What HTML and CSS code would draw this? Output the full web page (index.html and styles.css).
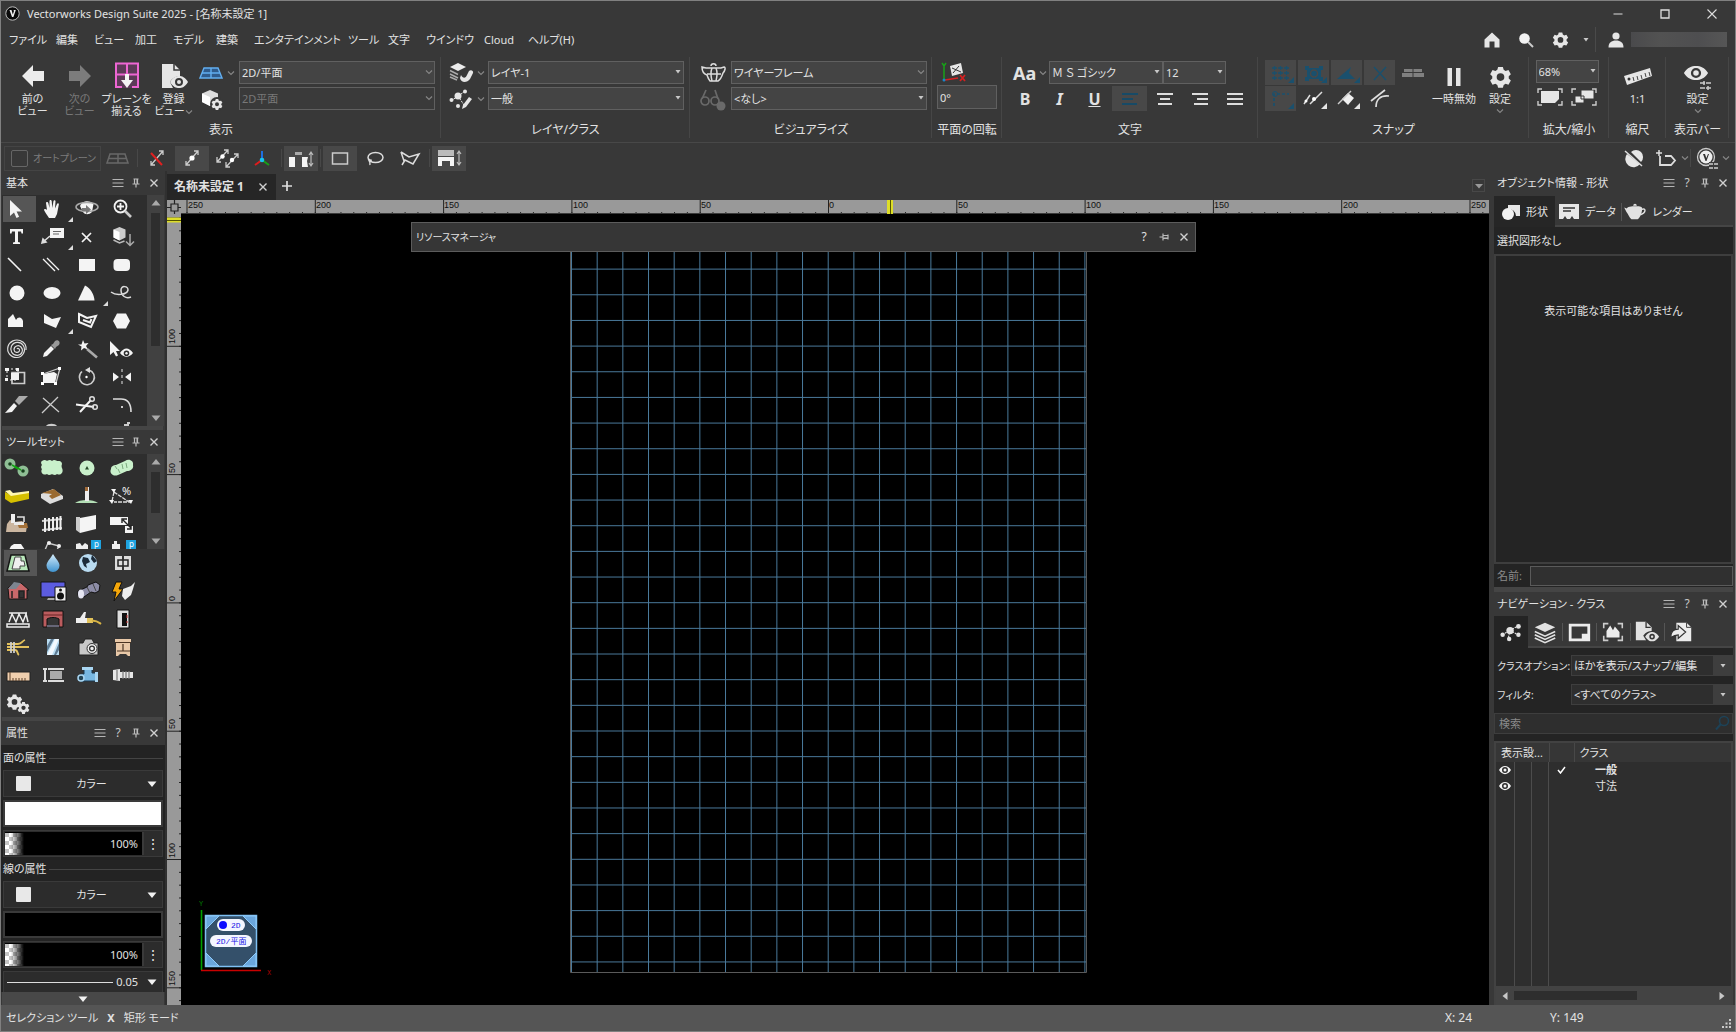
FILE: index.html
```html
<!DOCTYPE html>
<html lang="ja">
<head>
<meta charset="utf-8">
<title>Vectorworks Design Suite 2025 - [名称未設定 1]</title>
<link rel="stylesheet" href="styles.css">
</head>
<body>
<svg class="defs" aria-hidden="true">
  <defs>
    <linearGradient id="gBlue" x1="0" y1="0" x2="0" y2="1"><stop offset="0" stop-color="#d4ecfb"/><stop offset="1" stop-color="#3f93cf"/></linearGradient>
  </defs>
  <!-- shared glyphs -->
  <symbol id="caret" viewBox="0 0 8 6"><path d="M1 1.5l3 3 3-3" fill="none" stroke="#858585" stroke-width="1.2"/></symbol>
  <symbol id="tri" viewBox="0 0 8 6"><path d="M1.5 1h5L4 4.5z" fill="#c8c8c8"/></symbol>
  <symbol id="menu" viewBox="0 0 14 14"><path d="M1.500 3.500h11M1.500 7h11M1.500 10.500h11" stroke="#b5b5b5" stroke-width="1.200"/></symbol>
  <symbol id="pin" viewBox="0 0 14 14"><path d="M4.500 3h5M5.500 3v5M8.500 3v5M3.500 8h7M7 8v3.500" stroke="#bbb" stroke-width="1.200" fill="none"/><path d="M7.500 3h1.500v4.500H7.500z" fill="#bbb"/></symbol>
  <symbol id="close" viewBox="0 0 14 14"><path d="M3.500 3.500l7 7M10.500 3.500l-7 7" stroke="#d0d0d0" stroke-width="1.400"/></symbol>
  <symbol id="corner" viewBox="0 0 5 5"><path d="M5 0v5H0z" fill="currentColor"/></symbol>
  <symbol id="up" viewBox="0 0 12 8"><path d="M6 1l4.500 5.500h-9z" fill="#aaa"/></symbol>
  <symbol id="down" viewBox="0 0 12 8"><path d="M6 7L1.500 1.500h9z" fill="#aaa"/></symbol>
  <symbol id="downw" viewBox="0 0 12 8"><path d="M6 7L1.500 1.500h9z" fill="#f2f2f2"/></symbol>
  <symbol id="gear" viewBox="0 0 24 24"><path fill-rule="evenodd" fill="currentColor" d="M9.500 2h5l.8 3 2 1.200 3-.9 2.500 4.300-2.200 2.100v2.400l2.200 2.100-2.500 4.300-3-.9-2 1.200-.8 3h-5l-.8-3-2-1.200-3 .9-2.500-4.300 2.200-2.100v-2.400L1.200 9.600l2.500-4.300 3 .9 2-1.200zM12 8.600a4 4 0 100 8 4 4 0 000-8z"/></symbol>
  <symbol id="eye" viewBox="0 0 28 16"><path fill-rule="evenodd" fill="currentColor" d="M1 8C5 2 9 .5 14 .5S23 2 27 8c-4 6-8 7.500-13 7.500S5 14 1 8zM14 2.500a5.500 5.500 0 100 11 5.500 5.500 0 000-11z"/><circle cx="14" cy="8" r="3" fill="currentColor"/></symbol>
  <symbol id="eyes" viewBox="0 0 12 10"><path fill-rule="evenodd" fill="#f4f4f4" d="M0 5c3-5.500 9-5.500 12 0-3 5.500-9 5.500-12 0zm6-3a3 3 0 100 6 3 3 0 000-6z"/><circle cx="6" cy="5" r="1.500" fill="#f4f4f4"/></symbol>
  <symbol id="teapot" viewBox="0 0 26 20"><path d="M4 6C4 4 9 3.500 14 3.500S21 4 21 6s-1 9-5 12h-7C6.500 16 6 13 3.500 10L1 5zM11 3c0-3 4-3 4 0z" fill="currentColor"/><path d="M20.500 7c5-2 5 4-1.500 6" stroke="currentColor" stroke-width="1.600" fill="none"/></symbol>
  <symbol id="nodes" viewBox="0 0 28 28"><path d="M5 17l8-5 8-4M13 12l8 5M13 12l-2 9" stroke="currentColor" stroke-width="1.200" stroke-dasharray="2 1"/><g fill="currentColor"><circle cx="13" cy="12.500" r="4"/><circle cx="5" cy="17" r="2.400"/><circle cx="22" cy="8" r="2.600"/><circle cx="22" cy="17" r="2.400"/><circle cx="12" cy="21.500" r="2.400"/></g></symbol>
  <symbol id="layers" viewBox="0 0 28 28"><path d="M14 4l11 5-11 5L3 9z" fill="currentColor"/><path d="M3 13.500l11 5 11-5M3 17l11 5 11-5M3 20.500l11 5 11-5" fill="none" stroke="currentColor" stroke-width="1.800"/></symbol>
  <symbol id="pageeye" viewBox="0 0 28 28"><path d="M2 3h11l6 6v4c-6 0-9 5-9 5l3 5H2z" fill="currentColor"/><path d="M13 3v6h5" fill="none" stroke="#333" stroke-width="1.400"/><path fill-rule="evenodd" fill="currentColor" d="M12 19c3-4 5-5 7.500-5s4.500 1 7.500 5c-3 4-5 5-7.500 5S15 23 12 19zm7.500-3a3 3 0 100 6 3 3 0 000-6z"/><circle cx="19.500" cy="19" r="1.300" fill="currentColor"/></symbol>
  <!-- basic tools -->
  <symbol id="t-arrow" viewBox="0 0 28 28"><path d="M7 5v16l4-3.600 2.500 5.600 2.600-1.200-2.500-5.400H19z" fill="#f4f4f4"/></symbol>
  <symbol id="t-hand" viewBox="0 0 28 28"><path d="M11 23c-2-3-4-6-5-8 0-1.500 2-1.500 3 0L8 8c0-1.500 2-1.500 2.300 0l1.200 5V6c0-1.500 2-1.500 2.200 0l.6 7 1.200-7c.3-1.400 2.200-1 2 .4l-.5 7 2-4.400c.6-1.200 2.200-.6 1.800.8L19 19l-2 4z" fill="#f4f4f4"/></symbol>
  <symbol id="t-orbit" viewBox="0 0 28 28"><path d="M7 11a8 8 0 0113.500-2L19 17c-3 3-7 3-9 0z" fill="#f4f4f4"/><ellipse cx="14" cy="12" rx="11" ry="4.500" fill="none" stroke="#aaa" stroke-width="1.500"/><path d="M9 13h4v-3l5 4.500-5 4.500v-3H9z" fill="#777"/></symbol>
  <symbol id="t-zoom" viewBox="0 0 28 28"><circle cx="12.500" cy="11.500" r="6" fill="none" stroke="#f4f4f4" stroke-width="1.800"/><path d="M9 11.500h7M12.500 8v7" stroke="#f4f4f4" stroke-width="1.800"/><path d="M17 16l6 6" stroke="#ccc" stroke-width="2.600"/></symbol>
  <symbol id="t-text" viewBox="0 0 28 28"><path d="M7 6h13v4.500h-1.500L18 8.500h-3V19l2 .6V21h-7v-1.400l2-.6V8.500H9l-.5 2H7z" fill="#f4f4f4"/></symbol>
  <symbol id="t-callout" viewBox="0 0 28 28"><path d="M12 5h14v10H12z" fill="#f4f4f4"/><path d="M15 8.500h8M15 11h6" stroke="#666"/><path d="M12 13l-7 6M4 20l1-4 3 3z" stroke="#ddd" stroke-width="1.600" fill="#eee"/></symbol>
  <symbol id="t-x" viewBox="0 0 28 28"><path d="M9 10l9 9M18 10l-9 9" stroke="#f4f4f4" stroke-width="1.700"/></symbol>
  <symbol id="t-cube" viewBox="0 0 28 28"><path d="M11.500 4l6 2.500v8l-6 3-6-3v-8z" fill="#ccc"/><path d="M5.500 6.500l6 2.500v8.500l-6-3z" fill="#fff"/><path d="M5.500 17l6 3 5-2" stroke="#bbb" stroke-width="1.500" fill="none"/><path d="M22 11v11M18 18.500l4 4 4-4" stroke="#aaa" stroke-width="1.500" fill="none"/></symbol>
  <symbol id="t-line" viewBox="0 0 28 28"><path d="M5 7l13 13" stroke="#f4f4f4" stroke-width="1.600"/></symbol>
  <symbol id="t-dline" viewBox="0 0 28 28"><path d="M5 8l12 12M9 7l12 12" stroke="#f4f4f4" stroke-width="1.300"/></symbol>
  <symbol id="t-rect" viewBox="0 0 28 28"><path d="M6 8h16v12H6z" fill="#f4f4f4"/></symbol>
  <symbol id="t-rrect" viewBox="0 0 28 28"><rect x="5.500" y="8" width="16.500" height="12" rx="4" fill="#f4f4f4"/></symbol>
  <symbol id="t-circle" viewBox="0 0 28 28"><circle cx="14" cy="14" r="7.500" fill="#f4f4f4"/></symbol>
  <symbol id="t-ellipse" viewBox="0 0 28 28"><ellipse cx="14" cy="14" rx="8.500" ry="6" fill="#f4f4f4"/></symbol>
  <symbol id="t-arc" viewBox="0 0 28 28"><path d="M12 6.500c6 3 9 9 9.500 15H5z" fill="#f4f4f4"/></symbol>
  <symbol id="t-free" viewBox="0 0 28 28"><path d="M3 13c5 4 16 3 17-2 0-4-7-5-7 0 0 6 5 9 10 7" fill="none" stroke="#ddd" stroke-width="1.500"/></symbol>
  <symbol id="t-bump" viewBox="0 0 28 28"><path d="M5 20V12l5-5 3 6c2-4 6-3 7 1v6z" fill="#f4f4f4"/></symbol>
  <symbol id="t-poly" viewBox="0 0 28 28"><path d="M6 7l8 5 9-2-5 11-12-5z" fill="#f4f4f4"/></symbol>
  <symbol id="t-dpoly" viewBox="0 0 28 28"><path d="M6 7l8 4 9-2-5 11-12-5zM10 13l7 2.500 1.500-3.500" fill="none" stroke="#f4f4f4" stroke-width="2"/></symbol>
  <symbol id="t-hex" viewBox="0 0 28 28"><path d="M9 6.500h9l4 7.500-4 7.500H9L5 14z" fill="#f4f4f4"/></symbol>
  <symbol id="t-spiral" viewBox="0 0 28 28"><path d="M14 14c1-1.500 3 0 2.500 1.700-1 2.600-5.200 2-5.500-1 0-3.700 4.500-5.300 7-2.700 3 3.300.7 8-3.500 8.300C9 20.500 6.500 15 8.500 11c2.300-4.300 9-5 11.800-.5 3.200 5.500-.8 11.800-6.500 12C7.500 22.700 3.500 17 5 11.500 6.700 6 12.500 4 17 5.500c4 1.400 6.500 5 6 9.500" fill="none" stroke="#ddd" stroke-width="1.200"/></symbol>
  <symbol id="t-dropper" viewBox="0 0 28 28"><path d="M5 22l1-4 7-7 3 3-7 7z" fill="#f4f4f4"/><path d="M13 10l2-1 2-3c3-2 6 1 4 4l-3 2-1 2z" fill="#999"/></symbol>
  <symbol id="t-wand" viewBox="0 0 28 28"><path d="M10 5l1.500 3.500 4-.5-2.500 3 2 3.500-4-1.500-3 2.500.5-4L5 9.500h3.500z" fill="#f4f4f4"/><path d="M14 14l10 8.500" stroke="#aaa" stroke-width="2.600"/></symbol>
  <symbol id="t-seleye" viewBox="0 0 28 28"><path d="M2 6v14l3.500-3 2.500 4.500 2-1-2-4.500h4z" fill="#f4f4f4"/><path fill-rule="evenodd" d="M12 18c4-6 9-6 13 0-4 5-9 5-13 0zm6.500-2.500a2.800 2.800 0 100 5.600 2.800 2.800 0 000-5.600z" fill="#f4f4f4"/><circle cx="18.500" cy="18.200" r="1.200" fill="#f4f4f4"/></symbol>
  <symbol id="t-clip" viewBox="0 0 28 28"><path d="M4 6h11v11H4z" fill="none" stroke="#eee" stroke-dasharray="2 2"/><path d="M9 9.500h12.500v11H9z" fill="none" stroke="#ccc" stroke-width="1.700"/><path d="M8 10h8v7H8z" fill="#f4f4f4"/><path d="M2 5h4v3H2zM13 5h3v3h-3zM2 15h3v3H2z" fill="#f4f4f4"/></symbol>
  <symbol id="t-reshape" viewBox="0 0 28 28"><path d="M5 11l11-2 3 2-2 9-12 0z" fill="#f4f4f4"/><path d="M5 11L22 5l-4 15" stroke="#ccc" fill="none" stroke-width="1.300"/><path d="M3 9h3v3H3zM20 4h3v3h-3zM3 19h3v3H3zM16 19h3v3h-3z" fill="#fff"/></symbol>
  <symbol id="t-rotate" viewBox="0 0 28 28"><path d="M9 8.500a7.500 7.500 0 107-1.500" fill="none" stroke="#ccc" stroke-width="1.600"/><path d="M12 7l5-3v6z" fill="#ddd"/><circle cx="13.500" cy="14" r="1.200" fill="#fff"/></symbol>
  <symbol id="t-mirror" viewBox="0 0 28 28"><path d="M5 9.500l6 4.500-6 4.500zM23 9.500L17 14l6 4.500z" fill="#f4f4f4"/><path d="M14 6v16" stroke="#aaa" stroke-width="1.500" stroke-dasharray="3 3"/></symbol>
  <symbol id="t-knife" viewBox="0 0 28 28"><path d="M2 22l9-10 3 3-5 6z" fill="#f4f4f4"/><path d="M12 10l4-5h9l-9 9z" fill="#aaa"/></symbol>
  <symbol id="t-trim" viewBox="0 0 28 28"><path d="M4 22L20 6M5 7l16 14" stroke="#ccc" stroke-width="1.300"/></symbol>
  <symbol id="t-scissors" viewBox="0 0 28 28"><path d="M3 13.500l18 2.500M7 21L18 9" stroke="#f4f4f4" stroke-width="2"/><circle cx="19" cy="8" r="2.300" fill="none" stroke="#ddd" stroke-width="1.500"/><circle cx="22" cy="16" r="2.300" fill="none" stroke="#ddd" stroke-width="1.500"/></symbol>
  <symbol id="t-fillet" viewBox="0 0 28 28"><path d="M5 8h8c6 0 10 4 10 13" fill="none" stroke="#ddd" stroke-width="1.600"/><circle cx="14" cy="16" r="1" fill="#fff"/></symbol>
  <symbol id="t-half" viewBox="0 0 28 28"><path d="M8 7c2-3 9-3 11 0z" fill="#ccc"/></symbol>
  <symbol id="t-half2" viewBox="0 0 28 28"><path d="M16 6h5M19 4h3" stroke="#ccc" stroke-width="2"/></symbol>
  <!-- site planning tools -->
  <symbol id="s-link" viewBox="0 0 28 28"><path d="M6 10l14 7" stroke="#12a512" stroke-width="2"/><g fill="#8fbf95"><circle cx="7" cy="10" r="5.500"/><circle cx="20" cy="17" r="5.500"/></g><circle cx="7" cy="10" r="1.800" fill="#17401d"/><circle cx="20" cy="17" r="1.800" fill="#17401d"/><path d="M9 11l9 5" stroke="#12a512" stroke-width="1.500"/></symbol>
  <symbol id="s-bush" viewBox="0 0 28 28"><path d="M4 7c3-2 5 0 5 0s3-2 5 0c2-2 5 0 5 0s5-1 5 3c-1 2 0 4 0 4 2 4-1 8-5 6-2 2-5 0-5 0s-3 2-5 0c-4 2-7-2-5-5 0 0-2-2 0-4 0 0-2-3 0-4z" fill="#c9f0cb"/></symbol>
  <symbol id="s-tree" viewBox="0 0 28 28"><circle cx="14" cy="14" r="7.500" fill="#c9f0cb"/><path d="M14 12l2 3.500h-4z" fill="#264a28"/></symbol>
  <symbol id="s-hedge" viewBox="0 0 28 28"><path d="M3 15c0-3 3-4 5-4l9-4c4-3 9 0 8 4 1 4-3 6-6 6l-9 4c-5 2-9-2-7-6z" fill="#c9f0cb"/><path d="M7 12l2 3M10 15l2 4M14 10l1 5M18 9l1 5" stroke="#7aa97d" stroke-width="1"/></symbol>
  <symbol id="s-hard" viewBox="0 0 28 28"><path d="M2 10l6 3 18-3v7L8 21l-6-4z" fill="#d6c000"/><path d="M2 9l5-1 3 3 16-2v2L8 14z" fill="#fff8b0"/></symbol>
  <symbol id="s-slab" viewBox="0 0 28 28"><path d="M3 12l12-5 10 7v3l-13 5-9-6z" fill="#ddd"/><path d="M4 11l12-4 7 6-9 4-3-3 3-2z" fill="#9a6a30"/></symbol>
  <symbol id="s-post" viewBox="0 0 28 28"><path d="M2 21c5-4 18-4 23 0z" fill="#b4dfb6"/><path d="M12 5h4v14h-4z" fill="#eee"/><path d="M12 5h3v4h-3z" fill="#a06a38"/></symbol>
  <symbol id="s-grade" viewBox="0 0 28 28"><path d="M6 10l15 10H6M6 10L4 19" stroke="#ddd" stroke-width="1.300" fill="none" stroke-dasharray="4 1"/><path d="M3 7h5l-2 4zM1 18h5l-2 4zM20 18h5l-2 4z" fill="#f4f4f4"/></symbol>
  <symbol id="s-site" viewBox="0 0 28 28"><path d="M4 14l3-4 4 2 8-1 5 5-1 6H3z" fill="#cbb6a0"/><path d="M8 4h4v9H8z" fill="#eee"/><path d="M14 7h7v5" fill="none" stroke="#ddd" stroke-width="1.600"/><path d="M14 13h10l1 5h-9z" fill="#a5723a"/><path d="M11 12h10v3H11z" fill="#e8e8e8"/></symbol>
  <symbol id="s-rail" viewBox="0 0 28 28"><path d="M4 11l20-2M4 20l20-2" stroke="#ccc" stroke-width="1.800"/><path d="M7 8v14M11 8v13M15 7v14M19 7v13M22.500 6v14" stroke="#eee" stroke-width="2"/></symbol>
  <symbol id="s-wall" viewBox="0 0 28 28"><path d="M3 7h4v16l-4-3z" fill="#ccc"/><path d="M7 8l16-3v14L7 23z" fill="#f4f4f4"/></symbol>
  <symbol id="s-move" viewBox="0 0 28 28"><path d="M2 7h18v8H2z" fill="#f4f4f4"/><path d="M17 16h8v7h-8z" fill="#f4f4f4"/><path d="M15 10l8 8M14 13v-4h5M23 15v4h-4" stroke="#222" stroke-width="1.400" fill="none"/></symbol>
  <symbol id="s-c1" viewBox="0 0 28 28"><path d="M8 8l3-2h7l4 6H6z" fill="#f4f4f4"/></symbol>
  <symbol id="s-c2" viewBox="0 0 28 28"><path d="M7 12l3-7 11 3-2 4" stroke="#ccc" stroke-width="1.400" fill="none"/><circle cx="11" cy="5" r="2" fill="#eee"/><circle cx="21" cy="8" r="2" fill="#eee"/></symbol>
  <symbol id="s-c3" viewBox="0 0 28 28"><path d="M3 6l4-1 2 3 3-3 3 2v6H3z" fill="#eee"/><path d="M18 2h10v10H18z" fill="#1fa3e0"/></symbol>
  <symbol id="s-c4" viewBox="0 0 28 28"><path d="M6 3h3v3h3v6H4V6h2z" fill="#eee"/><path d="M18 2h10v10H18z" fill="#1fa3e0"/></symbol>
  <!-- tool set categories -->
  <symbol id="c-site" viewBox="0 0 28 28"><path d="M7 6h14l4 16H3z" fill="#b9e8bb" stroke="#151515" stroke-width="1.500"/><path d="M11 8h6v4h3l1 5h-5v3H8z" fill="#f0f0f0" stroke="#444"/></symbol>
  <symbol id="c-drop" viewBox="0 0 28 28"><path d="M14 5c3 5 6.500 8 6.500 11.500a6.500 6.500 0 01-13 0C7.500 13 11 10 14 5z" fill="url(#gBlue)"/></symbol>
  <symbol id="c-globe" viewBox="0 0 28 28"><circle cx="14" cy="14" r="9" fill="#b9dcf2"/><path d="M9 8l5 1 2 4-4 2 1 4-3-2-2-5zM18 6l5 6-3 2-3-4z" fill="#1c2b3a"/></symbol>
  <symbol id="c-plan" viewBox="0 0 28 28"><path d="M6 7h7v3h2V7h7v14h-7v-3h-2v3H6z" fill="#ddd"/><path d="M9 11h10v6H9zM14 10v8" fill="none" stroke="#222" stroke-width="1.500"/></symbol>
  <symbol id="c-house" viewBox="0 0 28 28"><path d="M4 11l6-5h7l8 7h-2v9H5z" fill="#c9686a" stroke="#151515"/><path d="M4 12l6-7 7 1-5 6z" fill="#7d8590"/><path d="M15 14h5v7h-5zM8 14v7" fill="#333" stroke="#222" stroke-width="1.500"/></symbol>
  <symbol id="c-av" viewBox="0 0 28 28"><path d="M2 5h24v15H2z" fill="#5c5ce0" stroke="#151515"/><path d="M9 21h8v2H8z" fill="#aaa"/><path d="M16 10h11v14H16z" fill="#eee" stroke="#111"/><circle cx="21.500" cy="19" r="3.500" fill="#111"/><circle cx="21.500" cy="13" r="1.500" fill="#111"/></symbol>
  <symbol id="c-light" viewBox="0 0 28 28"><path d="M4 14l9-4 1-2 8-3 4 3-1 6-4 2-4-1-7 5c-5 2-7-2-6-6z" fill="#8c8ca6" stroke="#111"/><ellipse cx="7" cy="17" rx="3" ry="4.500" fill="#e6e6f2"/><path d="M13 10l3 6M19 7l3 7" stroke="#444"/></symbol>
  <symbol id="c-elec" viewBox="0 0 28 28"><path d="M7 5h6l-3 7h4L5 24l2-9H3z" fill="#f5a70a" stroke="#111"/><path d="M14 12l8-3 4-4-2 7-2 6-6 5-3-4z" fill="#eee"/></symbol>
  <symbol id="c-truss" viewBox="0 0 28 28"><path d="M5 8h18M3 19h22v3H3zM5 17l3-8 4 8 3-8 4 8 3-8 2 8" fill="none" stroke="#eee" stroke-width="1.500"/></symbol>
  <symbol id="c-stage" viewBox="0 0 28 28"><path d="M4 6h20v16h-4v-8c-3-2-9-2-12 0v8H4z" fill="#bb5c5e" stroke="#111"/><path d="M8 20h12v2H8z" fill="#667"/><path d="M4 10h20" stroke="#6b2224"/></symbol>
  <symbol id="c-cable" viewBox="0 0 28 28"><path d="M2 13h4l4-6h2l-1 6h5v5H2z" fill="#eee"/><path d="M13 13h6v5h-6z" fill="#e3c35a"/><path d="M18 16c4-1 6 1 9 3" stroke="#d8b445" stroke-width="2" fill="none"/></symbol>
  <symbol id="c-rack" viewBox="0 0 28 28"><path d="M8 5h12v18H8z" fill="#ddd" stroke="#111"/><path d="M13 8h5v13h-5z" fill="#111"/><path d="M18 10v3M18 16v2" stroke="#c33"/></symbol>
  <symbol id="c-wire" viewBox="0 0 28 28"><path d="M3 11h11c4 0 4-3 7-4M3 14h22M3 17h8c3 0 2 4 4 5" fill="none" stroke="#e2c05c" stroke-width="1.800"/><path d="M7 9v11M10 9v11" stroke="#ccc" stroke-width="1.800"/></symbol>
  <symbol id="c-glass" viewBox="0 0 28 28"><path d="M8 6h12v16H8z" fill="#b9dcf2"/><path d="M8 22L16 6h4l-7 16z" fill="#f2f9ff"/><path d="M12 6h3L8 19v-6zM20 10v7l-3 5h-2z" fill="#5d7a92"/></symbol>
  <symbol id="c-camera" viewBox="0 0 28 28"><path d="M5 10h4l2-4h7l2 4h4v12H5z" fill="#c8c8c8" stroke="#222"/><circle cx="18" cy="15.500" r="5" fill="#eee" stroke="#333"/><circle cx="18" cy="15.500" r="2.400" fill="none" stroke="#333" stroke-width="1.300"/></symbol>
  <symbol id="c-cabinet" viewBox="0 0 28 28"><path d="M6 6h16v3h-1v14h-2l-2-2h-6l-2 2H7V9H6z" fill="#e8c8a8"/><path d="M6 9.500h16M14 11v7M8 18h13" stroke="#4a3423" stroke-width="1.200"/></symbol>
  <symbol id="c-ruler" viewBox="0 0 28 28"><path d="M3 11h23v9H3z" fill="#f0cfae" stroke="#222"/><path d="M6 11v9M9 17v3M12 17v3M15 17v3M18 17v3M21 17v3" stroke="#5c4028"/></symbol>
  <symbol id="c-beam" viewBox="0 0 28 28"><path d="M4 8h4M6 8v12M4 20h4M9 8h16M9 20h16" stroke="#ddd" stroke-width="2" fill="none"/><path d="M11 10h12v8H11z" fill="#aaa"/></symbol>
  <symbol id="c-pipe" viewBox="0 0 28 28"><path d="M10 8h8v4h5v8H10c-6 3-7-8 0-7z" fill="#78b8e2" stroke="#1b3b52"/><path d="M8 6h11v3H8z" fill="#a9d6f2"/><circle cx="7" cy="17" r="3" fill="#245" stroke="#a9d6f2" stroke-width="1.500"/><path d="M21 11h3v10h-3z" fill="#a9d6f2"/></symbol>
  <symbol id="c-bolt" viewBox="0 0 28 28"><path d="M4 9l7-1v12l-7-1zM11 11h13v6H11z" fill="#e6e6e6"/><path d="M14 10v8M17 10v8M20 10v8M8 9v10" stroke="#777" stroke-width="1.200"/></symbol>
</svg>

<div class="window">
  <header class="titlebar">
    <svg class="logo" width="15" height="15" viewBox="0 0 15 15"><circle cx="7.500" cy="7.500" r="6.700" fill="#0a0a0a" stroke="#bbb"/><path d="M4.500 4h2l1.300 4.500L9 5 8.500 4h2.300L8.400 11H7z" fill="#f0f0f0"/></svg>
    <h1 class="app-title">Vectorworks Design Suite 2025 - [名称未設定 1]</h1>
    <div class="win-buttons">
      <button aria-label="最小化"><svg width="12" height="12"><path d="M1.500 6h9" stroke="#ddd"/></svg></button>
      <button aria-label="最大化"><svg width="12" height="12"><path d="M2 2h8v8H2z" fill="none" stroke="#ddd" stroke-width="1.300"/></svg></button>
      <button aria-label="閉じる"><svg width="12" height="12"><path d="M1.500 1.500l9 9M10.500 1.500l-9 9" stroke="#ddd" stroke-width="1.100"/></svg></button>
    </div>
  </header>

  <div class="menubar">
    <nav class="menus">
      <a href="#">ファイル</a><a href="#">編集</a><a href="#">ビュー</a><a href="#">加工</a><a href="#">モデル</a><a href="#">建築</a><a href="#">エンタテインメント</a><a href="#">ツール</a><a href="#">文字</a><a href="#">ウインドウ</a><a href="#">Cloud</a><a href="#">ヘルプ(H)</a>
    </nav>
    <div class="account">
      <button aria-label="ホーム"><svg width="18" height="18"><path d="M9 1.500l7.500 7V16.500H11.500v-6h-5v6H1.500v-8z" fill="#e6e6e6"/></svg></button>
      <button aria-label="検索"><svg width="18" height="18"><circle cx="7.500" cy="7.500" r="5.300" fill="#f2f2f2"/><path d="M11 11l5 5" stroke="#ccc" stroke-width="2"/></svg></button>
      <button aria-label="環境設定"><svg width="17" height="17"><use href="#gear"/></svg></button>
      <svg class="acc-tri" width="8" height="6"><use href="#tri"/></svg>
      <span class="user"><svg width="18" height="18"><circle cx="9" cy="5" r="3.600" fill="#e6e6e6"/><path d="M1.500 16.500c0-5 3-7 7.500-7s7.500 2 7.500 7z" fill="#e6e6e6"/></svg><span class="redacted"></span></span>
    </div>
  </div>

  <section class="ribbon">
    <div class="group g-view">
      <div class="gbody">
        <button class="big"><svg width="28" height="28"><path d="M3 14L14 3v6h11v10H14v6z" fill="#ececec"/></svg><span>前の<br>ビュー</span></button>
        <button class="big off"><svg width="28" height="28"><path d="M25 14L14 3v6H3v10h11v6z" fill="#7c7c7c"/></svg><span>次の<br>ビュー</span></button>
        <button class="big"><svg width="28" height="28"><path d="M3 2h22v24H3z" fill="#5d3a58"/><path d="M9 25H3V1.500h22V25h-6M3 12.500h22M14 2v11" fill="none" stroke="#ee66d3" stroke-width="2"/><path d="M12 12h4v6h4l-6 8-6-8h4z" fill="#f4f4f4"/></svg><span>プレーンを<br>揃える</span></button>
        <button class="big"><svg width="28" height="28"><path d="M2 2h12l6 6v6c-7 0-10 6-10 6l3 6H2z" fill="#e6e6e6"/><path d="M14 2v6h6" fill="none" stroke="#3a3a3a" stroke-width="1.500"/><path fill-rule="evenodd" fill="#e6e6e6" d="M10 20c3-5 6-6 9-6s6 1 9 6c-3 5-6 6-9 6s-6-1-9-6zm9-4a4 4 0 100 8 4 4 0 000-8z"/><circle cx="19" cy="20" r="2" fill="#e6e6e6"/></svg><span>登録<br>ビュー<svg class="incaret" width="8" height="6"><use href="#caret"/></svg></span></button>
        <div class="rows">
          <div class="row"><svg width="24" height="24"><path d="M5 7h14l4 10H1zM12 7v10M3 12h18" fill="#2f5b8c" stroke="#62aef0" stroke-width="1.400"/></svg><svg width="8" height="6"><use href="#caret"/></svg><span class="combo w196"><select aria-label="ビュー"><option>2D/平面</option></select><svg width="8" height="6"><use href="#caret"/></svg></span></div>
          <div class="row"><svg width="24" height="24"><path d="M11 3l8 3.500v8L11 19l-8-4V6.500z" fill="#ddd"/><path d="M3 6.500l8 3.500v9l-8-4z" fill="#fff"/><circle cx="18" cy="17" r="7" fill="#383838"/><svg x="12" y="11" width="12" height="12"><use href="#gear" color="#e6e6e6"/></svg></svg><i class="sp"></i><span class="combo w196 off"><select aria-label="投影" disabled><option>2D平面</option></select><svg width="8" height="6"><use href="#caret"/></svg></span></div>
        </div>
      </div>
      <h2>表示</h2>
    </div>
    <div class="group g-layer">
      <div class="gbody"><div class="rows">
        <div class="row"><svg width="26" height="24"><path d="M10 2l8 4-8 4-8-4z" fill="#ececec"/><path d="M2 9.500l8 4M2 13l8 4M2 16l7 3" stroke="#aaa" stroke-width="1.500" fill="none"/><path d="M13 14c2 4 5 3 6 0l2-4c2-2 5 0 4 2l-3 6c-3 4-9 4-10-1zM13 14l3-2" fill="#e6e6e6"/></svg><svg width="8" height="6"><use href="#caret"/></svg><span class="combo w196"><select aria-label="レイヤ"><option>レイヤ-1</option></select><svg width="8" height="6"><use href="#tri"/></svg></span></div>
        <div class="row"><svg width="26" height="24"><path d="M3 14l7-5 6-4M10 9l6 9" stroke="#e6e6e6" stroke-dasharray="2 1"/><g fill="#e6e6e6"><circle cx="10" cy="9" r="3.500"/><circle cx="3.500" cy="13" r="2"/><circle cx="17" cy="4.500" r="2"/><circle cx="10" cy="19" r="2"/><path d="M15 18l6-8 3 2-6 8-4 2z"/></g></svg><svg width="8" height="6"><use href="#caret"/></svg><span class="combo w196"><select aria-label="クラス"><option>一般</option></select><svg width="8" height="6"><use href="#tri"/></svg></span></div>
      </div></div>
      <h2>レイヤ/クラス</h2>
    </div>
    <div class="group g-vis">
      <div class="gbody"><div class="rows">
        <div class="row"><svg width="26" height="24"><g fill="none" stroke="#ddd" stroke-width="1.500"><path d="M6 7L2 6c0 4 2 7 5 8 1 3 2 5 3 6h8c2-1 4-5 5-8 2-2 3-6 1-6l-3 1z"/><path d="M11 5c0-3 5-3 5 0M7 13h14M12 7c-2 5-1 9 0 13M16 7c2 5 1 9 0 13"/></g></svg><span class="combo w196"><select aria-label="レンダリング"><option>ワイヤーフレーム</option></select><svg width="8" height="6"><use href="#caret"/></svg></span></div>
        <div class="row"><svg width="26" height="24"><g fill="none" stroke="#6a6a6a" stroke-width="1.700"><circle cx="5" cy="14" r="4"/><circle cx="15" cy="14" r="4"/><path d="M2 12L6 3M18 12L15 3"/></g><circle cx="21" cy="19" r="4.500" fill="#6a6a6a"/></svg><span class="combo w196"><select aria-label="スタイル"><option>&lt;なし&gt;</option></select><svg width="8" height="6"><use href="#tri"/></svg></span></div>
      </div></div>
      <h2>ビジュアライズ</h2>
    </div>
    <div class="group g-rot">
      <div class="gbody col"><svg width="28" height="24"><path d="M10 5l11-3 2 10-11 3z" fill="#e6e6e6"/><path d="M12 7l9 4M19 5l-6 7" stroke="#333"/><path d="M2 2l2 3 2-3M4 5v13" stroke="#18a018" stroke-width="1.500" fill="none"/><path d="M5 19l13-2M20 14l5 6M25 14l-5 6" stroke="#d92020" stroke-width="1.700"/><circle cx="4" cy="19" r="1.500" fill="#1787c9"/></svg>
      <input class="field" aria-label="回転角度" value="0°"></div>
      <h2>平面の回転</h2>
    </div>
    <div class="group g-text">
      <div class="gbody col">
        <div class="row"><b class="aa">Aa</b><svg width="8" height="6"><use href="#caret"/></svg><span class="combo w114"><select aria-label="フォント"><option>Ｍ Ｓ ゴシック</option></select><svg width="8" height="6"><use href="#tri"/></svg></span><span class="combo w63"><select aria-label="サイズ"><option>12</option></select><svg width="8" height="6"><use href="#tri"/></svg></span></div>
        <div class="biu">
          <button aria-label="太字"><b>B</b></button><button aria-label="斜体"><b><em>I</em></b></button><button aria-label="下線"><b><u>U</u></b></button>
          <button class="on" aria-label="左揃え"><svg width="18" height="14"><path d="M1 2h16M1 7h11M1 12h15" stroke="#174a66" stroke-width="2"/></svg></button>
          <button aria-label="中央揃え"><svg width="18" height="14"><path d="M1 2h16M4 7h10M2 12h14" stroke="#ddd" stroke-width="2"/></svg></button>
          <button aria-label="右揃え"><svg width="18" height="14"><path d="M1 2h16M6 7h11M3 12h14" stroke="#ddd" stroke-width="2"/></svg></button>
          <button aria-label="両端揃え"><svg width="18" height="14"><path d="M1 2h16M1 7h16M1 12h16" stroke="#ddd" stroke-width="2"/></svg></button>
        </div>
      </div>
      <h2>文字</h2>
    </div>
    <div class="group g-snap">
      <div class="gbody">
        <div class="snapgrid">
          <button class="on" aria-label="グリッド"><svg width="26" height="20"><path d="M4 5h5M10 5h5M16 5h5M4 10h5M10 10h5M16 10h5M4 15h5M10 15h5M16 15h5M6.500 3v4M12.500 3v4M18.500 3v4M6.500 8v4M12.500 8v4M18.500 8v4M6.500 13v4M12.500 13v4M18.500 13v4" stroke="#1a506d" stroke-width="1.300"/></svg></button>
          <button class="on" aria-label="図形"><svg width="26" height="20"><g fill="#1a506d"><path d="M6 5h14v11H6zM4 3h4v4H4zM18 3h4v4h-4zM4 14h4v4H4zM18 14h4v4h-4z"/></g><circle cx="13" cy="10.500" r="3.500" fill="none" stroke="#484848" stroke-width="1.500"/></svg></button>
          <button class="on" aria-label="角度"><svg width="26" height="20"><path d="M3 16L17 4l-2 6 6 6z" fill="#1a506d"/></svg></button>
          <button class="on nocorner" aria-label="交点"><svg width="26" height="20"><path d="M7 4l12 13M19 4L7 17" stroke="#1a506d" stroke-width="1.500"/></svg></button>
          <button class="nocorner" aria-label="作業平面"><svg width="26" height="20"><path d="M4 6h18v3H4zM2 10h22v4H2z" fill="#808080"/><path d="M13 5v10" stroke="#383838"/></svg></button>
          <button class="on" aria-label="定点"><svg width="26" height="20"><path d="M6 17V5h15" fill="none" stroke="#1a506d" stroke-width="1.700" stroke-dasharray="3 2"/><circle cx="7" cy="5" r="2.500" fill="none" stroke="#1a506d"/></svg></button>
          <button aria-label="距離"><svg width="26" height="20"><path d="M3 15l6-9M9 15L21 3" stroke="#ddd" stroke-width="1.500"/><circle cx="13" cy="10" r="2" fill="#fff"/><circle cx="5" cy="12" r="1.500" fill="#fff"/></svg></button>
          <button aria-label="エッジ"><svg width="26" height="20"><path d="M8 10l6-6 6 5-6 7z" fill="#f0f0f0"/><path d="M4 15L17 2" stroke="#ccc" stroke-width="1.500"/></svg></button>
          <button class="nocorner" aria-label="接線"><svg width="26" height="20"><path d="M4 12L18 1M9 18c0-7 4-12 13-11" stroke="#ddd" stroke-width="1.700" fill="none"/></svg></button>
        </div>
        <button class="big w52"><svg width="28" height="28"><path d="M7.500 6h4.500v18H7.500zM16 6h4.500v18H16z" fill="#e6e6e6"/></svg><span>一時無効</span></button>
        <button class="big w40"><svg width="28" height="28"><svg x="3" y="3" width="23" height="23"><use href="#gear" color="#e6e6e6"/></svg></svg><span>設定</span><svg class="below" width="8" height="6"><use href="#caret"/></svg></button>
      </div>
      <h2>スナップ</h2>
    </div>
    <div class="group g-zoom">
      <div class="gbody col">
        <span class="combo w63"><select aria-label="倍率"><option>68%</option></select><svg width="8" height="6"><use href="#tri"/></svg></span>
        <div class="zoomrow">
          <button aria-label="用紙全体"><svg width="26" height="20"><path d="M4 4h18v8l-4 4H4z" fill="#e6e6e6"/><path d="M1 6V2h4M21 2h4v4M1 14v4h4M21 18h4v-4" fill="none" stroke="#ccc" stroke-width="1.400"/></svg></button>
          <button aria-label="図形全体"><svg width="26" height="20"><path d="M10 3h13v9H10zM4 9h9v7H4z" fill="#e6e6e6" stroke="#383838"/><path d="M1 6V2h4M21 2h4v4M1 14v4h4M21 18h4v-4" fill="none" stroke="#ccc" stroke-width="1.400"/></svg></button>
        </div>
      </div>
      <h2>拡大/縮小</h2>
    </div>
    <div class="group g-scale">
      <div class="gbody col"><button class="big w56"><svg width="30" height="28"><path d="M1 14l26-8 2 8L4 23z" fill="#e6e6e6"/><path d="M10 15l1 4M14 14l1 4M18 13l1 4M22 11l1 4M26 10l1 4" stroke="#444"/><circle cx="6" cy="17" r="1.500" fill="#333"/></svg><span>1:1</span></button></div>
      <h2>縮尺</h2>
    </div>
    <div class="group g-bar">
      <div class="gbody col"><button class="big w56"><svg width="32" height="28"><svg x="1" y="3" width="26" height="16"><use href="#eye" color="#e6e6e6"/></svg><path d="M17 18h14v10H17z" fill="#383838"/><path d="M18 21h12M18 26h12" stroke="#ccc" stroke-width="1.500" stroke-dasharray="5 1"/><path d="M22 19v4M26 24v4" stroke="#ccc" stroke-width="1.500"/></svg><span>設定</span><svg class="below" width="8" height="6"><use href="#caret"/></svg></button></div>
      <h2>表示バー</h2>
    </div>
  </section>

  <section class="modebar">
    <label class="auto"><input type="checkbox" disabled>オートプレーン</label>
    <button class="m" aria-label="平面"><svg width="26" height="24"><path d="M5 8h15l3 9H2zM13 8v9M4 12.500h18" fill="none" stroke="#686868" stroke-width="1.500"/></svg></button>
    <i class="sep"></i>
    <button class="m" aria-label="変形禁止"><svg width="26" height="24"><path d="M7 19L19 5M15 5h4v4M7 15v4h4" stroke="#ccc" stroke-width="1.300" fill="none"/><path d="M7 7l11 12" stroke="#e02020" stroke-width="2"/></svg></button>
    <button class="m on" aria-label="単一変形"><svg width="26" height="24"><path d="M7 19L19 5M15 5h4v4M7 15v4h4" stroke="#ccc" stroke-width="1.300" fill="none"/><circle cx="13" cy="12" r="2.600" fill="#fff"/></svg></button>
    <button class="m" aria-label="複数変形"><svg width="26" height="24"><path d="M3 16L14 4M10 4h4v4M3 11v5h4M12 21L24 8M20 8h4v4M12 16v5h4" stroke="#ccc" stroke-width="1.300" fill="none"/><circle cx="8.500" cy="10.500" r="2.200" fill="#fff"/><circle cx="18" cy="14" r="2.200" fill="#fff"/></svg></button>
    <button class="m" aria-label="3軸"><svg width="26" height="24"><path d="M13 13V5" stroke="#1e6fe0" stroke-width="2"/><path d="M13 14l-7 5" stroke="#e01c1c" stroke-width="2"/><path d="M13 14l7 5" stroke="#18a018" stroke-width="2"/><circle cx="13" cy="14" r="2.300" fill="#19c3ef"/></svg></button>
    <i class="sep"></i>
    <button class="m on" aria-label="壁結合"><svg width="28" height="24"><path d="M2 11h6v10H2zM15 11h6l-1 4 1 6h-6z" fill="#f4f4f4"/><path d="M8 6h7v3H8z" fill="#aaa"/><path d="M24 7v12M22 9l2-3 2 3M22 17l2 3 2-3" stroke="#bbb" stroke-width="1.200" fill="none"/></svg></button>
    <i class="sep"></i>
    <button class="m on" aria-label="矩形"><svg width="26" height="24"><path d="M5.500 7h15v11h-15z" fill="none" stroke="#ccc" stroke-width="1.500"/></svg></button>
    <button class="m" aria-label="なげなわ"><svg width="26" height="24"><ellipse cx="13.500" cy="11.500" rx="7.500" ry="5" fill="none" stroke="#ddd" stroke-width="1.500"/><path d="M8 13c-2 2 0 4 1 2s-2-1-1 4" fill="none" stroke="#ddd" stroke-width="1.400"/></svg></button>
    <button class="m" aria-label="多角形"><svg width="26" height="24"><path d="M4 6l8 5 10-3-6 10-8-4-3 5M4 6l3 9" fill="none" stroke="#ddd" stroke-width="1.500"/></svg></button>
    <i class="sep"></i>
    <button class="m on" aria-label="相互操作"><svg width="28" height="24"><path d="M3 4h16v6H3z" fill="#bbb"/><path d="M3 11h16v9h-4v-5H7v5H3z" fill="#f4f4f4"/><path d="M24 6v12M22 8l2-3 2 3M22 16l2 3 2-3" stroke="#bbb" stroke-width="1.200" fill="none"/></svg></button>
    <span class="grow"></span>
    <button class="m" aria-label="表示切替"><svg width="24" height="24"><path d="M5 8a7.500 7.500 0 0013 10z" fill="#e6e6e6"/><path d="M9 6a7 7 0 0110 10z" fill="#e6e6e6"/><path d="M3 5l17 15" stroke="#ddd" stroke-width="1.500"/></svg></button>
    <button class="m tight" aria-label="タグ"><svg width="24" height="24"><path d="M6 10v9h11l4-4.500L17 10h-6" fill="none" stroke="#ddd" stroke-width="1.800"/><path d="M5 4v6M2 7h6" stroke="#ddd" stroke-width="1.500"/></svg></button>
    <svg width="8" height="6"><use href="#caret"/></svg>
    <i class="sep"></i>
    <button class="m tight" aria-label="V設定"><svg width="24" height="24"><circle cx="11" cy="11" r="6.500" fill="#eee"/><circle cx="11" cy="11" r="8.500" fill="none" stroke="#ccc" stroke-width="1.300"/><path d="M8 8h2l1.300 4L13 8h1l-2.500 7h-1z" fill="#333"/><path d="M14 16h9v7h-9z" fill="#383838"/><path d="M14 18h9M14 22h9" stroke="#ccc" stroke-width="1.400" stroke-dasharray="4 1"/></svg></button>
    <svg width="8" height="6"><use href="#caret"/></svg>
  </section>

  <main class="work">
    <aside class="left">
      <header class="ptitle"><h2>基本</h2><button aria-label="メニュー"><svg width="14" height="14"><use href="#menu"/></svg></button><button aria-label="ピン"><svg width="14" height="14"><use href="#pin"/></svg></button><button aria-label="閉じる"><svg width="14" height="14"><use href="#close"/></svg></button></header>
      <div class="palette basic">
        <div class="tools" id="basicTools"></div>
        <div class="vscroll"><svg width="12" height="8"><use href="#up"/></svg><div class="track"><i class="thumb t1"></i></div><svg width="12" height="8"><use href="#down"/></svg></div>
      </div>
      <div class="split"></div>
      <header class="ptitle"><h2>ツールセット</h2><button aria-label="メニュー"><svg width="14" height="14"><use href="#menu"/></svg></button><button aria-label="ピン"><svg width="14" height="14"><use href="#pin"/></svg></button><button aria-label="閉じる"><svg width="14" height="14"><use href="#close"/></svg></button></header>
      <div class="palette site">
        <div class="tools" id="siteTools"></div>
        <div class="vscroll"><svg width="12" height="8"><use href="#up"/></svg><div class="track"><i class="thumb t2"></i></div><svg width="12" height="8"><use href="#down"/></svg></div>
      </div>
      <div class="tools sets" id="setTools"></div>
      <div class="split"></div>
      <header class="ptitle"><h2>属性</h2><button aria-label="メニュー"><svg width="14" height="14"><use href="#menu"/></svg></button><button aria-label="ヘルプ">?</button><button aria-label="ピン"><svg width="14" height="14"><use href="#pin"/></svg></button><button aria-label="閉じる"><svg width="14" height="14"><use href="#close"/></svg></button></header>
      <div class="attrs">
        <h3>面の属性</h3>
        <button class="arow"><i class="chip"></i><span>カラー</span><svg width="12" height="8"><use href="#downw"/></svg></button>
        <button class="swatch white" aria-label="面の色"></button>
        <div class="opacity"><button class="bar"><i></i><span>100%</span></button><button class="dots" aria-label="詳細">⋮</button></div>
        <h3>線の属性</h3>
        <button class="arow"><i class="chip"></i><span>カラー</span><svg width="12" height="8"><use href="#downw"/></svg></button>
        <button class="swatch black" aria-label="線の色"></button>
        <div class="opacity"><button class="bar"><i></i><span>100%</span></button><button class="dots" aria-label="詳細">⋮</button></div>
        <button class="thick"><i></i><span>0.05</span><svg width="12" height="8"><use href="#downw"/></svg></button>
      </div>
      <button class="more" aria-label="その他"><svg width="12" height="8"><use href="#downw"/></svg></button>
    </aside>

    <section class="doc">
      <div class="tabs">
        <div class="tab"><span>名称未設定 1</span><button aria-label="タブを閉じる"><svg width="14" height="14"><use href="#close"/></svg></button></div>
        <button class="plus" aria-label="新規"><svg width="12" height="12"><path d="M6 1v10M1 6h10" stroke="#ddd" stroke-width="1.700"/></svg></button>
        <span class="grow"></span>
        <button class="tablist" aria-label="タブ一覧"><svg width="12" height="8"><path d="M6 6.500L2 2h8z" fill="#999"/></svg></button>
      </div>
      <div class="view">
        <svg class="origin" width="14" height="14"><path d="M4 4h7v7H4zM7.500 0v4M7.500 11v3M0 7.500h4M11 7.500h3" fill="none" stroke="#222" stroke-width="1.200"/></svg>
        <svg class="hruler">
          <defs>
            <pattern id="hmin" x="5.500" y="0" width="12.830" height="14" patternUnits="userSpaceOnUse"><path d="M.5 12v2" stroke="#222"/></pattern>
            <pattern id="hmaj" x="5.500" y="0" width="128.300" height="14" patternUnits="userSpaceOnUse"><path d="M.5 0v14" stroke="#222"/></pattern>
          </defs>
          <rect width="100%" height="14" fill="url(#hmin)"/><rect width="100%" height="14" fill="url(#hmaj)"/>
          <path d="M0 13.500h3000" stroke="#3a3a3a"/>
          <g class="rtext"><text x="7" y="8">250</text><text x="135" y="8">200</text><text x="263" y="8">150</text><text x="392" y="8">100</text><text x="520" y="8">50</text><text x="648" y="8">0</text><text x="777" y="8">50</text><text x="905" y="8">100</text><text x="1033" y="8">150</text><text x="1162" y="8">200</text><text x="1290" y="8">250</text></g>
          <path d="M709 0v14" stroke="#dede28" stroke-width="6"/><path d="M709.500 0v14" stroke="#555500"/>
        </svg>
        <svg class="vruler">
          <defs>
            <pattern id="vmin" x="0" y="3.500" width="14" height="12.830" patternUnits="userSpaceOnUse"><path d="M12 .5h2" stroke="#222"/></pattern>
            <pattern id="vmaj" x="0" y="3.500" width="14" height="128.300" patternUnits="userSpaceOnUse"><path d="M0 .5h14" stroke="#222"/></pattern>
          </defs>
          <rect width="14" height="100%" fill="url(#vmin)"/><rect width="14" height="100%" fill="url(#vmaj)"/>
          <g class="rtext"><text transform="translate(8 130) rotate(-90)">100</text><text transform="translate(8 259) rotate(-90)">50</text><text transform="translate(8 387) rotate(-90)">0</text><text transform="translate(8 515) rotate(-90)">50</text><text transform="translate(8 644) rotate(-90)">100</text><text transform="translate(8 772) rotate(-90)">150</text></g>
          <path d="M0 6h14" stroke="#dede28" stroke-width="5"/><path d="M0 6.500h14" stroke="#555500"/>
        </svg>
        <div class="canvas">
          <svg class="sheet">
            <defs><pattern id="grid" x="390" y="3.300" width="25.670" height="25.660" patternUnits="userSpaceOnUse"><path d="M.5 0v26M0 .5h26" stroke="#4a7a9c" fill="none"/></pattern></defs>
            <rect x="390" y="32" width="515" height="726" fill="url(#grid)"/>
            <path d="M389.500 32v726.500h516V32" fill="none" stroke="#5a5a5a"/>
            <!-- view cube and axes -->
            <path d="M20.500 696v60" stroke="#00a000" stroke-width="1.600"/><path d="M20 756.500h60" stroke="#c80000" stroke-width="1.600"/>
            <text x="18" y="692" class="axis" fill="#008000">Y</text><text x="86" y="761" class="axis" fill="#a00000">X</text>
            <rect x="24.500" y="701.500" width="51" height="51" fill="#34506a" stroke="#7ec0f4" stroke-width="1.500"/>
            <path d="M25 702h13l-13 13zM75 702H62l13 13zM25 752h13l-13-13zM75 752H62l13-13z" fill="#6aa6dc" stroke="#8ecbfa"/>
            <rect x="36" y="705" width="28" height="12" rx="6" fill="#f4f6ff"/><circle cx="42" cy="711" r="4" fill="#0a0aff"/>
            <text x="50" y="714" class="cube">2D</text>
            <rect x="29" y="721" width="42" height="12" rx="6" fill="#f4f6ff"/><text x="35" y="730" class="cube">2D/平面</text>
          </svg>
          <div class="resource"><h2>リソースマネージャ</h2><button aria-label="ヘルプ">?</button><button aria-label="ピン"><svg class="side" width="14" height="14"><use href="#pin"/></svg></button><button aria-label="閉じる"><svg width="14" height="14"><use href="#close"/></svg></button></div>
        </div>
      </div>
    </section>

    <aside class="right">
      <header class="ptitle"><h2>オブジェクト情報 - 形状</h2><button aria-label="メニュー"><svg width="14" height="14"><use href="#menu"/></svg></button><button aria-label="ヘルプ">?</button><button aria-label="ピン"><svg width="14" height="14"><use href="#pin"/></svg></button><button aria-label="閉じる"><svg width="14" height="14"><use href="#close"/></svg></button></header>
      <nav class="otabs">
        <button class="cur"><svg width="20" height="18"><path d="M7 2h12v11h-4a7 7 0 00-8-7z" fill="#e6e6e6"/><circle cx="7" cy="11" r="6" fill="#f0f0f0"/></svg>形状</button>
        <button><svg width="22" height="18"><path d="M1 1h20v15h-5l-2-3-2 3H9l-2-3-2 3H1z" fill="#e6e6e6"/><path d="M5 5h12M5 8h8" stroke="#333" stroke-width="1.500"/></svg>データ</button>
        <button class="div"><svg width="24" height="18"><use href="#teapot"/></svg>レンダー</button>
      </nav>
      <p class="sel">選択図形なし</p>
      <div class="empty">表示可能な項目はありません</div>
      <div class="namerow"><label for="nm">名前:</label><input id="nm" class="name"></div>
      <div class="split"></div>
      <header class="ptitle nav"><h2>ナビゲーション - クラス</h2><button aria-label="メニュー"><svg width="14" height="14"><use href="#menu"/></svg></button><button aria-label="ヘルプ">?</button><button aria-label="ピン"><svg width="14" height="14"><use href="#pin"/></svg></button><button aria-label="閉じる"><svg width="14" height="14"><use href="#close"/></svg></button></header>
      <nav class="ntabs">
        <button class="cur" aria-label="クラス"><svg width="26" height="26"><use href="#nodes"/></svg></button>
        <button aria-label="レイヤ"><svg width="26" height="26"><use href="#layers"/></svg></button>
        <button class="div" aria-label="シート"><svg width="26" height="26" viewBox="0 0 28 28"><path fill-rule="evenodd" d="M3 5h23v19H3zM6 8v13h11v-5h6V8z" fill="#ececec"/></svg></button>
        <button class="div" aria-label="ビューポート"><svg width="26" height="26" viewBox="0 0 28 28"><path d="M7 20v-7l4-6 3 5 2-4 5 6v6z" fill="#ececec"/><path d="M4 10V5h5M19 5h5v5M4 18v5h5M19 23h5v-5" fill="none" stroke="#ccc" stroke-width="1.700"/></svg></button>
        <button class="div" aria-label="登録画面"><svg width="26" height="26"><use href="#pageeye"/></svg></button>
        <button class="div" aria-label="参照"><svg width="26" height="26" viewBox="0 0 28 28"><path d="M9 4h11l5 5v15H9z" fill="#ececec"/><path d="M3 20c0-7 3-9 8-9V7l8 7-8 7v-4c-3 0-5 1-8 3z" fill="#ececec" stroke="#333" stroke-width="1.300"/><path d="M20 4v5h5" fill="none" stroke="#333"/></svg></button>
      </nav>
      <div class="nform">
        <label for="co">クラスオプション:</label><span class="combo dark"><select id="co"><option>ほかを表示/スナップ/編集</option></select><svg width="8" height="6"><use href="#tri"/></svg></span>
        <label for="fl">フィルタ:</label><span class="combo dark"><select id="fl"><option>&lt;すべてのクラス&gt;</option></select><svg width="8" height="6"><use href="#tri"/></svg></span>
      </div>
      <div class="search"><input aria-label="検索" placeholder="検索"><svg width="16" height="16"><circle cx="10" cy="6" r="4.500" fill="none" stroke="#1d4257" stroke-width="1.600"/><path d="M7 9l-5 5.500" stroke="#1d4257" stroke-width="2"/></svg></div>
      <div class="classes">
        <table>
          <thead><tr><th colspan="3">表示設...</th><th></th><th>クラス</th></tr></thead>
          <tbody>
            <tr><td><svg width="12" height="10"><use href="#eyes"/></svg></td><td></td><td></td><td class="chk"><svg width="9" height="8"><path d="M1 4l2.500 3L8 1" fill="none" stroke="#fff" stroke-width="1.500"/></svg></td><td class="nm"><b>一般</b></td></tr>
            <tr><td><svg width="12" height="10"><use href="#eyes"/></svg></td><td></td><td></td><td></td><td class="nm">寸法</td></tr>
          </tbody>
        </table>
        <div class="lines"></div>
        <div class="hscroll"><svg width="8" height="10"><path d="M6.500 1v8L1.500 5z" fill="#c8c8c8"/></svg><div><i></i></div><svg width="8" height="10"><path d="M1.500 1v8l5-4z" fill="#c8c8c8"/></svg></div>
      </div>
    </aside>
  </main>

  <footer class="status"><span class="jp">セレクション ツール</span><b>X</b><span class="jp">矩形 モード</span><span class="grow"></span><span class="cx">X: 24</span><span class="cy">Y: 149</span>
    <svg width="12" height="12"><g fill="#ccc"><path d="M9 1h2v2H9zM9 4.500h2v2H9zM5.500 4.500h2v2h-2zM9 8h2v2H9zM5.500 8h2v2h-2zM2 8h2v2H2z"/></g></svg></footer>
</div>
<script src="tools.js"></script>
</body>
</html>
```
FILE: tools.js
```js
// Letters shown on top of some tool icons.
var marks = {
  's-grade': '<text x="14" y="13" font-size="11" fill="#f4f4f4">%</text>',
  's-c3': '<text x="21" y="9" font-size="8" fill="#fff">p</text>',
  's-c4': '<text x="21" y="9" font-size="8" fill="#fff">p</text>'
};
// Fills a tool palette; a trailing "+" marks a tool with a fly-out, "*" the active one.
function fill(id, names) {
  document.getElementById(id).innerHTML = names.split(' ').map(function (n) {
    var name = n.replace(/[+*]/g, '');
    return '<button class="tool' + (n.includes('*') ? ' active' : '') + '" aria-label="' + name + '">' +
      '<svg width="28" height="28"><use href="#' + name + '"/>' + (marks[name] || '') + '</svg>' +
      (n.includes('+') ? '<svg class="fly" width="5" height="5"><use href="#corner"/></svg>' : '') + '</button>';
  }).join('');
}
fill('basicTools', 't-arrow* t-hand+ t-orbit t-zoom t-text t-callout+ t-x t-cube t-line t-dline t-rect t-rrect t-circle t-ellipse t-arc+ t-free t-bump t-poly+ t-dpoly t-hex t-spiral t-dropper t-wand t-seleye t-clip t-reshape t-rotate t-mirror t-knife t-trim t-scissors t-fillet t-none t-half t-none t-half2');
fill('siteTools', 's-link s-bush s-tree s-hedge s-hard s-slab s-post s-grade s-site s-rail s-wall s-move s-c1 s-c2 s-c3 s-c4');
fill('setTools', 'c-site* c-drop c-globe c-plan c-house c-av c-light c-elec c-truss c-stage c-cable c-rack c-wire c-glass c-camera c-cabinet c-ruler c-beam c-pipe c-bolt c-gears');
document.querySelector('#setTools .tool:last-child').innerHTML =
  '<svg width="28" height="28" color="#e6e6e6"><svg x="2" y="4" width="17" height="17"><use href="#gear"/></svg><svg x="13" y="12" width="13" height="13"><use href="#gear"/></svg></svg>';
```
FILE: styles.css
```css
* { box-sizing: border-box; }
html, body { height: 100%; margin: 0; }
body {
  background: #383838;
  color: #e2e2e2;
  font: 12px/14px "Noto Sans", "Noto Sans CJK JP", sans-serif;
  font-feature-settings: "palt";
}
h1, h2, h3, p { margin: 0; font-size: 12px; font-weight: 400; }
button, input, select { font: inherit; font-feature-settings: inherit; color: inherit; margin: 0; }
button { background: none; border: 0; padding: 0; }
a { color: inherit; text-decoration: none; }
svg { display: block; flex: none; }
.defs { position: absolute; width: 0; height: 0; }
.grow { flex: 1; }

.window { display: flex; flex-direction: column; min-height: 100vh; border: 1px solid #808080; }

/* title and menu */
.titlebar { display: flex; align-items: center; height: 25px; padding-left: 4px; }
.app-title { flex: 1; margin-left: 7px; font: 11px/16px "Noto Sans", "Noto Sans CJK JP", sans-serif; }
.win-buttons { display: flex; }
.win-buttons button { display: grid; place-items: center; width: 47px; height: 22px; }
.menubar { display: flex; align-items: center; justify-content: space-between; height: 27px; }
.menus { display: grid; grid-template-columns: 47px 38px 41px 38px 43px 38px 94px 40px 38px 58px 44px 60px; padding-left: 8px; white-space: nowrap; font-size: 11px; }
.account { display: flex; align-items: center; padding-right: 8px; color: #e6e6e6; }
.account button { display: grid; place-items: center; width: 34px; }
.acc-tri { margin: 0 5px; }
.user { display: flex; align-items: center; gap: 6px; height: 25px; padding-left: 11px; border-left: 1px solid #4a4a4a; }
.redacted { width: 96px; height: 15px; background: linear-gradient(90deg, #4a4a4c, #525252 30%, #4e4e50 70%, #565656); }

/* ribbon */
.ribbon { display: flex; height: 90px; border-bottom: 1px solid #484848; }
.group { position: relative; display: flex; flex-direction: column; flex: none; padding: 4px 0 3px; }
.group::after { content: ""; position: absolute; right: 0; top: 4px; bottom: 4px; width: 1px; background: #464646; }
.group h2 { text-align: center; margin-top: auto; line-height: 18px; }
.gbody { display: flex; justify-content: flex-start; }
.gbody.col { flex-direction: column; align-items: center; }
.g-view { width: 440px; } .g-layer { width: 249px; } .g-vis { width: 242px; }
.g-rot { width: 70px; } .g-text { width: 256px; } .g-snap { width: 271px; }
.g-zoom { width: 80px; } .g-scale { width: 57px; } .g-bar { width: 63px; }
.big { display: flex; flex-direction: column; align-items: center; width: 47px; padding-top: 5px; font-size: 11px; line-height: 12px; white-space: nowrap; }
.big > span { margin-top: 3px; }
.off { color: #787878; }
.incaret { display: inline-block; }
.below { margin-top: 3px; }
.rows { display: flex; flex-direction: column; gap: 3px; padding: 4px 0 0 10px; }
.row { display: flex; align-items: center; gap: 4px; height: 23px; }
.g-view .gbody { padding-left: 8px; }
.g-view .rows { padding-left: 2px; }
.g-layer .rows { padding-left: 7px; }
.g-layer .row { gap: 3px; }
.g-vis .row { gap: 5px; }
.sp { width: 8px; }
.combo { position: relative; display: block; height: 23px; }
.combo select { width: 100%; height: 100%; padding: 0 2px; border: 1px solid #606060; border-radius: 0; background: #444; appearance: none; font-size: 11px; }
.combo select:disabled { color: #787878; background: #3a3a3a; opacity: 1; }
.combo > svg { position: absolute; right: 2px; top: 8px; }
.w196 { width: 196px; } .w114 { width: 114px; } .w63 { width: 63px; }
.big.w56 { width: 56px; } .big.w52 { width: 52px; } .big.w40 { width: 40px; }
.field { width: 60px; height: 24px; padding: 0 2px; border: 1px solid #606060; background: #444; font-size: 11px; }
.g-rot .gbody { padding-top: 4px; }
.g-rot svg { align-self: flex-start; margin-left: 8px; }
.g-text .gbody { align-items: flex-start; padding: 4px 0 0 11px; gap: 2px; }
.g-text .row { gap: 0; }
.aa { width: 26px; font: 700 18px/22px "Noto Sans"; }
.g-text .row > svg { margin: 0 2px 0 0; }
.biu { display: flex; align-items: center; height: 25px; font-size: 16px; }
.biu button { display: grid; place-items: center; width: 35px; height: 25px; }
.biu button:first-child { width: 24px; margin-right: 5px; }
.on { background: #484848; }
.snapgrid { display: grid; grid-template-columns: repeat(5, 31px); grid-auto-rows: 25px; gap: 1px 2px; padding: 3px 0 0 7px; }
.snapgrid button { position: relative; display: grid; place-items: center; }
.snapgrid button::after { content: ""; position: absolute; right: 2px; bottom: 2px; border: 3px solid; border-color: transparent #e6e6e6 #e6e6e6 transparent; }
.snapgrid .on::after { border-color: transparent #1a506d #1a506d transparent; }
.snapgrid .nocorner::after { display: none; }
.g-zoom .gbody { padding: 3px 4px 0 0; gap: 4px; }
.zoomrow { display: flex; gap: 8px; }

/* mode bar */
.modebar { display: flex; align-items: center; height: 28px; padding: 2px 5px 0 3px; }
.auto { display: flex; align-items: center; gap: 5px; width: 97px; height: 25px; padding-left: 6px; border: 1px solid #444; color: #7c7c7c; font-size: 10px; white-space: nowrap; overflow: hidden; }
.auto input { appearance: none; flex: none; width: 17px; height: 17px; margin: 0; border: 1px solid #666; border-radius: 2px; }
.m { display: grid; place-items: center; width: 34px; height: 25px; margin-right: 1px; }
.m.tight { width: 28px; }
.sep { width: 1px; height: 18px; margin: 0 2px 0 1px; background: #484848; }

/* three-column work area */
.work { display: grid; grid-template-columns: 166px minmax(0, 1fr) 246px; flex: 1; }
.ptitle { display: flex; align-items: center; height: 24px; padding: 0 2px 0 5px; }
.ptitle h2 { flex: 1; font-size: 11px; white-space: nowrap; }
.ptitle button { display: grid; place-items: center; width: 18px; color: #c8c8c8; }
.split { height: 4px; background: #454545; margin: 0 2px 0 1px; }
.left { display: flex; flex-direction: column; border-right: 2px solid #303030; }
.palette { display: flex; margin: 0 1px; background: #2e2e2e; }
.basic { height: 231px; } .site { height: 95px; }
.tools { display: grid; grid-template-columns: repeat(4, 35px); grid-auto-rows: 28px; flex: 1; overflow: hidden; }
.sets { flex: none; height: 168px; padding-left: 2px; background: #353535; }
.tool { position: relative; display: grid; place-items: center start; margin: 1px; }
.tool.active { background: #565656; }
.tool > svg { margin: -1px 0; }
.tool > .fly { position: absolute; right: -2px; bottom: 1px; color: #ddd; }
.vscroll { display: flex; flex-direction: column; align-items: center; width: 17px; padding: 4px 0; background: #414141; }
.track { flex: 1; padding: 6px 0; }
.thumb { display: block; width: 9px; background: #2e2e2e; }
.t1 { height: 133px; } .t2 { height: 41px; }
.attrs { display: flex; flex-direction: column; gap: 3px; padding: 4px 2px 0; background: #232323; height: 247px; }
.attrs h3 { display: flex; align-items: center; gap: 2px; height: 18px; font-size: 11px; }
.attrs h3::after { content: ""; flex: 1; height: 1px; background: #444; }
.arow, .opacity, .swatch { flex: none; height: 27px; border: 1px solid #3a3a3a; background: #2c2c2c; }
.arow, .thick { display: flex; align-items: center; padding: 0 4px 0 12px; font-size: 11px; }
.arow span { flex: 1; text-align: center; padding-left: 6px; }
.chip { width: 15px; height: 15px; border-radius: 1px; background: #e8e8e8; }
.swatch { border: 2px solid #3a3a3a; }
.swatch.white { background: #fff; }
.swatch.black { background: #000; }
.opacity { display: flex; padding: 1px; }
.bar { display: flex; align-items: center; justify-content: space-between; flex: 1; background: #000; padding-right: 4px; font-size: 11px; }
.bar i { width: 19px; height: 22px; background: linear-gradient(90deg, transparent 30%, #000), conic-gradient(#fff 25%, #c4c4c4 0 50%, #fff 0 75%, #c4c4c4 0) 0 0 / 8px 8px; }
.dots { width: 19px; border-left: 2px solid #3a3a3a; font-size: 14px; }
.thick { height: 21px; padding-left: 3px; border: 1px solid #3a3a3a; border-bottom: 0; background: #2c2c2c; gap: 3px; }
.thick i { flex: 1; height: 1px; background: #ddd; }
.thick svg { margin-left: 5px; }
.more { display: grid; place-items: center; height: 13px; margin: 0 1px; background: #484848; }

/* document */
.doc { display: flex; flex-direction: column; }
.tabs { display: flex; align-items: center; height: 29px; }
.tab { display: flex; align-items: center; justify-content: space-between; align-self: flex-end; width: 109px; height: 26px; padding: 0 6px 0 7px; background: #262626; font-weight: 700; white-space: nowrap; }
.plus { margin-left: 5px; }
.tablist { display: grid; place-items: center; width: 13px; height: 13px; margin-right: 4px; border: 1px solid #484848; }
.view { display: grid; grid-template: 14px minmax(0, 1fr) / 14px minmax(0, 1fr); flex: 1; background: #999; }
.hruler { width: 100%; height: 14px; background: #999; }
.vruler { width: 14px; height: 100%; background: #999; }
.rtext { font: 9px "Liberation Sans", sans-serif; fill: #111; }
.canvas { position: relative; overflow: hidden; background: #000; }
.sheet { width: 100%; height: 100%; }
.axis { font: 7px "Liberation Mono", monospace; }
.cube { font: 8px "Liberation Mono", "Noto Sans CJK JP", monospace; fill: #1414e6; }
.resource { position: absolute; left: 230px; top: 8px; display: flex; align-items: center; width: 785px; height: 30px; padding: 0 1px 0 4px; border: 1px solid #5c5c5c; background: #363636; }
.resource h2 { flex: 1; font-size: 10px; }
.resource button { display: grid; place-items: center; width: 20px; }
.side { transform: rotate(90deg); }

/* right palettes */
.right { display: flex; flex-direction: column; padding: 0 2px 0 5px; }
.right .ptitle { padding: 0 1px 0 3px; }
.otabs { display: flex; height: 32px; padding-top: 1px; border-bottom: 2px solid #454545; }
.otabs button { display: flex; align-items: center; justify-content: center; gap: 5px; width: 64px; height: 32px; font-size: 11px; white-space: nowrap; }
.otabs .cur { width: 61px; background: #262626; }
.otabs .div { width: 74px; margin-left: 2px; }
.ntabs .div, .otabs .div { background: linear-gradient(#555, #555) 0 50% / 1px 18px no-repeat; }
.sel { height: 27px; padding: 7px 3px; background: #242424; font-size: 11px; }
.empty { height: 310px; padding-top: 48px; border: 2px solid #3e3e3e; background: #242424; text-align: center; font-size: 11px; }
.namerow { display: flex; align-items: center; height: 23px; padding-left: 3px; background: #242424; color: #8a8a8a; font-size: 11px; }
.namerow label { width: 33px; }
.name { flex: 1; min-width: 0; height: 20px; border: 1px solid #5a5a5a; background: #303030; }
.right > .split { margin: 0; height: 5px; }
.ntabs { display: flex; height: 32px; border-bottom: 2px solid #454545; }
.ntabs button { display: grid; place-items: center; width: 34px; height: 32px; }
.ntabs .cur { background: #242424; }
.nform { display: grid; grid-template-columns: 77px minmax(0, 1fr); grid-auto-rows: 21px; gap: 8px 0; align-items: center; padding: 7px 0 8px; background: #242424; font-size: 10px; white-space: nowrap; }
.nform label { padding-left: 3px; }
.combo.dark { height: 21px; }
.combo.dark select { border-color: #3e3e3e; background: linear-gradient(#3e3e3e, #3e3e3e) 100% 0 / 19px 100% no-repeat #2e2e2e; }
.combo.dark > svg { right: 6px; }
.search { position: relative; height: 28px; background: #242424; }
.search input { width: 100%; height: 21px; padding: 0 4px; border: 1px solid #3e3e3e; background: #2e2e2e; font-size: 11px; }
.search input::placeholder { color: #8a8a8a; }
.search svg { position: absolute; right: 3px; top: 2px; }
.classes { display: flex; flex-direction: column; flex: 1; border: 2px solid #424242; border-bottom: 0; background: #2e2e2e; }
table { width: 100%; border-collapse: collapse; table-layout: fixed; font-size: 11px; background: linear-gradient(#4c4c4c, #4c4c4c) 18px 19px / 1px 100% no-repeat, linear-gradient(#4c4c4c, #4c4c4c) 35px 19px / 1px 100% no-repeat, linear-gradient(#4c4c4c, #4c4c4c) 52px 19px / 1px 100% no-repeat; }
th { height: 19px; padding: 0 0 0 5px; background: #363636; border-right: 1px solid #484848; font-weight: 400; text-align: left; line-height: 14px; white-space: nowrap; }
th:nth-child(1) { width: 53px; } th:nth-child(2) { width: 25px; } th:last-child { border: 0; }
td { height: 16px; padding: 0 0 0 3px; line-height: 14px; }
.chk { padding-left: 8px; }
td.nm { padding-left: 21px; }
.lines { flex: 1; background: linear-gradient(#4c4c4c, #4c4c4c) 18px 0 / 1px 100% no-repeat, linear-gradient(#4c4c4c, #4c4c4c) 35px 0 / 1px 100% no-repeat, linear-gradient(#4c4c4c, #4c4c4c) 52px 0 / 1px 100% no-repeat; }
.hscroll { display: flex; align-items: center; gap: 5px; height: 19px; padding: 0 5px; background: #434343; }
.hscroll div { flex: 1; }
.hscroll i { display: block; width: 62%; height: 9px; background: #2e2e2e; }

/* status bar */
.status { display: flex; align-items: center; gap: 9px; height: 26px; padding: 0 3px 0 5px; background: #555; }
.status b, .status .jp { font-size: 11px; }
.cx { width: 96px; }
.cy { width: 161px; }
.status svg { align-self: flex-end; margin-bottom: 1px; }
```
